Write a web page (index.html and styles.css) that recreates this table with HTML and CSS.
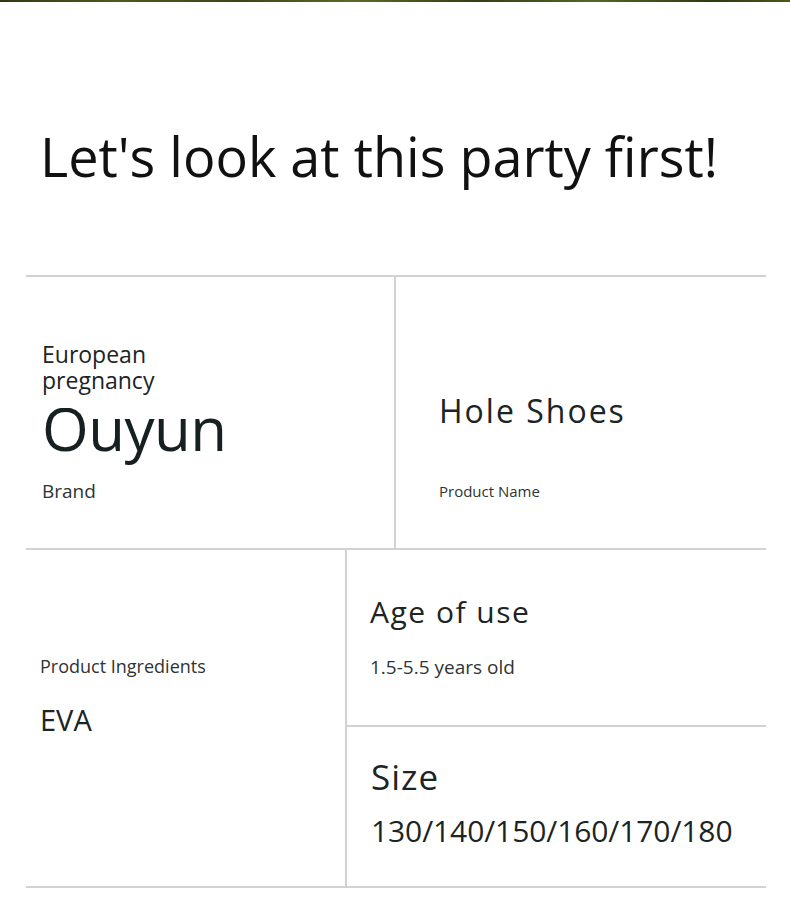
FILE: index.html
```html
<!DOCTYPE html>
<html lang="en">
<head>
<meta charset="utf-8">
<title>Product specs</title>
<link rel="stylesheet" href="styles.css">
</head>
<body>
<div class="topbar"></div>
<header class="hero">
  <h1 class="title">Let's look at this party first!</h1>
</header>
<section class="spec">
  <div class="row row-top">
    <div class="cell cell-brand">
      <div class="brand-sub">European<br>pregnancy</div>
      <div class="brand-name">Ouyun</div>
      <div class="label label-brand">Brand</div>
    </div>
    <div class="cell cell-name">
      <div class="value value-name">Hole Shoes</div>
      <div class="label label-name">Product Name</div>
    </div>
  </div>
  <div class="row row-bottom">
    <div class="cell cell-ingr">
      <div class="label label-ingr">Product Ingredients</div>
      <div class="value value-ingr">EVA</div>
    </div>
    <div class="stack">
      <div class="cell cell-age">
        <div class="value value-age">Age of use</div>
        <div class="label label-age">1.5-5.5 years old</div>
      </div>
      <div class="cell cell-size">
        <div class="value value-size">Size</div>
        <div class="value value-sizes">130/140/150/160/170/180</div>
      </div>
    </div>
  </div>
</section>
</body>
</html>
```
FILE: styles.css
```css
html, body {
  margin: 0;
  padding: 0;
  background: #ffffff;
}
body {
  font-family: "Open Sans", "Noto Sans", sans-serif;
  color: #1c2424;
  width: 790px;
}
.topbar {
  height: 2px;
  background: linear-gradient(90deg, #2f3a12 0%, #4d5a22 15%, #3a4618 30%, #5b6a2a 45%, #333f14 60%, #55652a 75%, #2e3a10 90%, #4a5820 100%);
}
.hero {
  height: 273px;
  padding-left: 40px;
  box-sizing: border-box;
  padding-top: 124px;
}
.title {
  margin: 0;
  font-weight: 400;
  font-size: 54px;
  line-height: 60px;
  color: #111111;
  white-space: nowrap;
}
.spec {
  margin: 0 24px 0 26px;
  border-top: 2px solid #d2d2d2;
}
.row {
  display: grid;
  border-bottom: 2px solid #d2d2d2;
}
.row-top {
  grid-template-columns: 370px 1fr;
  height: 271px;
}
.row-bottom {
  grid-template-columns: 321px 1fr;
  height: 336px;
}
.cell {
  box-sizing: border-box;
}
.cell-brand {
  border-right: 2px solid #d2d2d2;
  padding: 64px 0 0 16px;
}
.brand-sub {
  font-size: 23px;
  line-height: 26px;
  color: #1c2424;
}
.brand-name {
  font-size: 60px;
  line-height: 40px;
  height: 62px;
  margin-top: 15px;
  letter-spacing: -0.5px;
  overflow: hidden;
  color: #172020;
}
.label {
  color: #2e3434;
}
.label-brand {
  font-size: 19px;
  line-height: 24px;
  margin-top: 9px;
}
.cell-name {
  padding: 116px 0 0 43px;
}
.value-name {
  font-size: 32px;
  line-height: 36px;
  letter-spacing: 2px;
}
.label-name {
  font-size: 15px;
  line-height: 20px;
  margin-top: 52px;
}
.cell-ingr {
  border-right: 2px solid #d2d2d2;
  padding: 105px 0 0 14px;
}
.label-ingr {
  font-size: 18px;
  line-height: 22px;
}
.value-ingr {
  font-size: 29px;
  line-height: 36px;
  margin-top: 25px;
}
.stack {
  display: flex;
  flex-direction: column;
}
.cell-age {
  height: 177px;
  border-bottom: 2px solid #d2d2d2;
  padding: 44px 0 0 23px;
}
.value-age {
  font-size: 30px;
  line-height: 36px;
  letter-spacing: 1.5px;
}
.label-age {
  font-size: 19px;
  line-height: 24px;
  margin-top: 25px;
}
.cell-size {
  padding: 29px 0 0 24px;
}
.value-size {
  font-size: 35px;
  line-height: 42px;
  letter-spacing: 1px;
}
.value-sizes {
  font-size: 30px;
  line-height: 40px;
  margin-top: 13px;
  letter-spacing: -0.1px;
}
```
